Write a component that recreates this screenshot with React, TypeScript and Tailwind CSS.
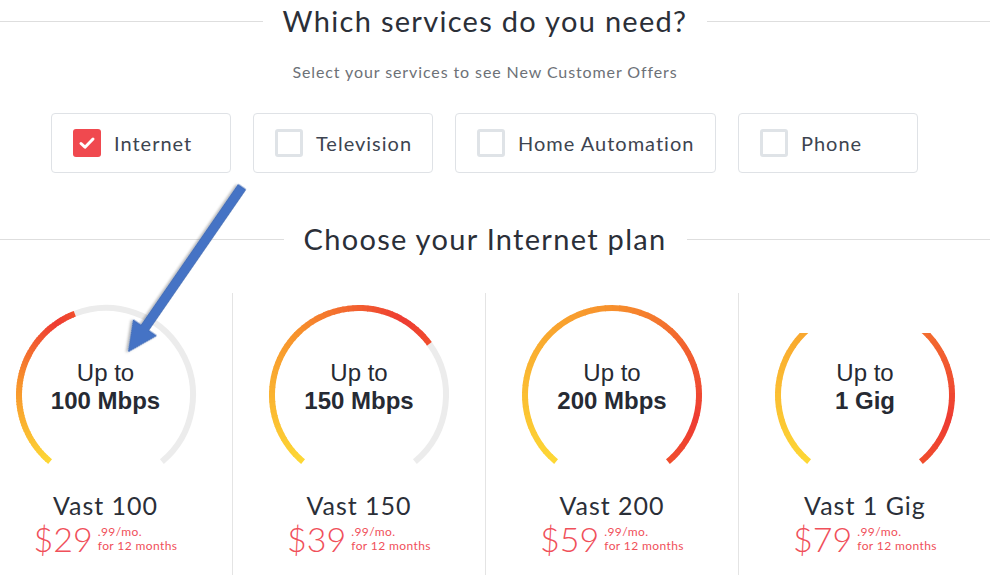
import React from "react";

type Plan = {
  name: string;
  speed: string;
  price: string;
  fill: number; // end angle of the coloured arc, degrees clockwise from 12 o'clock
  clipTop?: boolean;
};

const PLANS: Plan[] = [
  { name: "Vast 100", speed: "100 Mbps", price: "29", fill: -21 },
  { name: "Vast 150", speed: "150 Mbps", price: "39", fill: 54 },
  { name: "Vast 200", speed: "200 Mbps", price: "59", fill: 140 },
  { name: "Vast 1 Gig", speed: "1 Gig", price: "79", fill: 140, clipTop: true },
];

const SERVICES = [
  { label: "Internet", checked: true, w: "w-[180px]" },
  { label: "Television", checked: false, w: "w-[180px]" },
  { label: "Home Automation", checked: false, w: "w-[261px]" },
  { label: "Phone", checked: false, w: "w-[180px]" },
];

const HEAD = "font-['Lato','Open_Sans',sans-serif]";

const START = -140;
const END = 140;
const R = 87;

const STOPS: [number, number[]][] = [
  [0, [253, 216, 53]],
  [0.5, [247, 144, 44]],
  [0.88, [238, 59, 50]],
  [1, [240, 78, 45]],
];

function colorAt(t: number) {
  for (let i = 1; i < STOPS.length; i++) {
    const [t1, c1] = STOPS[i];
    const [t0, c0] = STOPS[i - 1];
    if (t <= t1) {
      const k = (t - t0) / (t1 - t0);
      const c = c0.map((v, j) => Math.round(v + (c1[j] - v) * k));
      return `rgb(${c[0]},${c[1]},${c[2]})`;
    }
  }
  return "rgb(240,78,45)";
}

function polar(a: number) {
  const rad = ((a - 90) * Math.PI) / 180;
  return [100 + R * Math.cos(rad), 100 + R * Math.sin(rad)];
}

function arc(a0: number, a1: number) {
  const [x0, y0] = polar(a0);
  const [x1, y1] = polar(a1);
  const large = a1 - a0 > 180 ? 1 : 0;
  return `M ${x0} ${y0} A ${R} ${R} 0 ${large} 1 ${x1} ${y1}`;
}

function Gauge({ fill, clipTop, id }: { fill: number; clipTop?: boolean; id: string }) {
  const n = 60;
  const step = (fill - START) / n;
  const segs = [];
  for (let i = 0; i < n; i++) {
    const a0 = START + step * i;
    const a1 = i === n - 1 ? fill : a0 + step + 0.6;
    segs.push(
      <path key={i} d={arc(a0, a1)} stroke={colorAt((i + 0.5) / n)} strokeWidth={6} fill="none" />,
    );
  }
  return (
    <svg width="200" height="176" viewBox="0 0 200 176" className="mx-auto block">
      <defs>
        <clipPath id={id}>
          <rect x="0" y={clipTop ? 38 : 0} width="200" height="176" />
        </clipPath>
      </defs>
      <g clipPath={`url(#${id})`}>
        {fill < END && <path d={arc(fill, END)} stroke="#ececec" strokeWidth={6} fill="none" />}
        {segs}
      </g>
    </svg>
  );
}

// the page content is centred 20px left of the window's middle; the right rule runs on to the edge
function SectionTitle({ children }: { children: React.ReactNode }) {
  return (
    <div className="flex h-[42px] items-center">
      <div className="h-px flex-1 basis-0 bg-[#dedede]" />
      <h2
        className={`${HEAD} px-5 text-[29px] font-normal leading-[36px] tracking-[1.3px] text-[#2b2f38]`}
      >
        {children}
      </h2>
      <div className="h-px flex-1 basis-[20px] bg-[#dedede]" />
    </div>
  );
}

function Checkbox({ checked }: { checked: boolean }) {
  if (checked) {
    return (
      <span className="flex h-[28px] w-[28px] items-center justify-center rounded-[3px] bg-[#f0494f]">
        <svg width="18" height="18" viewBox="0 0 18 18">
          <path
            d="M3 9.5 L7 13.2 L15 5"
            stroke="white"
            strokeWidth="3"
            fill="none"
            strokeLinecap="round"
            strokeLinejoin="round"
          />
        </svg>
      </span>
    );
  }
  return <span className="block h-[28px] w-[28px] rounded-[3px] border-[3px] border-[#dfe3e7]" />;
}

export default function App() {
  return (
    <div className="relative h-[575px] w-[990px] overflow-hidden bg-white">
      <SectionTitle>Which services do you need?</SectionTitle>
      <p
        className={`${HEAD} mt-[21px] pr-[20px] text-center text-[16px] leading-[18px] tracking-[0.9px] text-[#6d7177]`}
      >
        Select your services to see New Customer Offers
      </p>

      <div className="mt-[32px] flex gap-[22px] pl-[51px]">
        {SERVICES.map((s) => (
          <div
            key={s.label}
            className={`${s.w} flex h-[60px] items-center gap-[13px] rounded-[4px] border border-[#dfe2e6] pl-[21px]`}
          >
            <Checkbox checked={s.checked} />
            <span className={`${HEAD} text-[20px] tracking-[1px] text-[#3d4450]`}>{s.label}</span>
          </div>
        ))}
      </div>

      <div className="mt-[45px]">
        <SectionTitle>Choose your Internet plan</SectionTitle>
      </div>

      <div className="-ml-[21px] mt-[33px] flex h-[282px]">
        {PLANS.map((p, i) => (
          <div key={p.name} className={`w-[253px] shrink-0 ${i > 0 ? "border-l border-[#e4e4e4]" : ""}`}>
            <div className="relative mt-[2px]">
              <Gauge fill={p.fill} clipTop={p.clipTop} id={`clip-${i}`} />
              <div className="absolute left-0 right-0 top-[64px] text-center font-['Liberation_Sans',Arial,sans-serif] text-[24px] leading-[28px] text-[#262a33]">
                <div>Up to</div>
                <div className="font-bold">{p.speed}</div>
              </div>
            </div>
            <div
              className={`${HEAD} mt-[19px] text-center text-[25px] leading-[30px] tracking-[1px] text-[#2b2f38]`}
            >
              {p.name}
            </div>
            <div className={`${HEAD} mt-[1px] flex items-center justify-center gap-[5px] text-[#f0505a]`}>
              <span className="text-[34px] font-light leading-[36px]">${p.price}</span>
              <span className="flex flex-col text-[12px] leading-[14px] tracking-[0.4px]">
                <span>.99/mo.</span>
                <span>for 12 months</span>
              </span>
            </div>
          </div>
        ))}
      </div>

      <svg className="pointer-events-none absolute left-0 top-0" width="990" height="575">
        <defs>
          <filter id="arrowShadow" x="-20%" y="-20%" width="140%" height="140%">
            <feDropShadow dx="1.5" dy="1.5" stdDeviation="1.2" floodColor="#000" floodOpacity="0.3" />
          </filter>
        </defs>
        <g transform="translate(242 187) rotate(124.6)" filter="url(#arrowShadow)">
          <polygon
            points="0,-4.5 171,-4.5 171,-14 200,0 171,14 171,4.5 0,4.5"
            fill="#4473c5"
            stroke="#3a66b3"
            strokeWidth="0.8"
          />
        </g>
      </svg>
    </div>
  );
}
